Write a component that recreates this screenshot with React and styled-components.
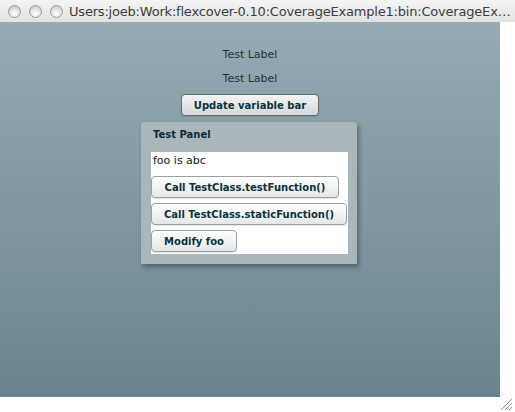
import styled, { createGlobalStyle } from "styled-components";

const GlobalStyle = createGlobalStyle`
  html, body {
    margin: 0;
    padding: 0;
    background: #ffffff;
  }
`;

const Window = styled.div`
  width: 515px;
  height: 412px;
  display: flex;
  flex-direction: column;
  overflow: hidden;
  font-family: "DejaVu Sans", Verdana, sans-serif;
`;

const TitleBar = styled.div`
  height: 22px;
  flex: none;
  display: flex;
  align-items: center;
  padding-left: 8px;
  background: linear-gradient(#f4f4f4, #e2e2e2);
  box-sizing: border-box;
`;

const Light = styled.span`
  width: 13px;
  height: 13px;
  border-radius: 50%;
  box-sizing: border-box;
  border: 1px solid #9c9c9c;
  background: radial-gradient(circle at 50% 70%, #ffffff 0%, #e6e6e6 45%, #bdbdbd 100%);
  margin-right: 8px;
  flex: none;
`;

const Title = styled.span`
  font-family: "DejaVu Sans", "Lucida Grande", sans-serif;
  font-size: 13px;
  letter-spacing: -0.2px;
  color: #3c3c3c;
  white-space: nowrap;
  margin-left: -2px;
`;

const Middle = styled.div`
  display: flex;
  height: 375px;
  flex: none;
`;

const Stage = styled.div`
  width: 500px;
  height: 375px;
  background: linear-gradient(#97aab3, #6c838d);
  display: flex;
  flex-direction: column;
  align-items: center;
  padding-top: 24px;
  box-sizing: border-box;
`;

const Label = styled.div`
  height: 18px;
  line-height: 18px;
  font-size: 11px;
  color: #21333b;
  margin-top: ${(p) => p.$top || 0}px;
`;

const Button = styled.button`
  width: ${(p) => p.$w}px;
  height: 22px;
  margin: ${(p) => p.$m || "0"};
  padding: 0;
  box-sizing: border-box;
  border: 1px solid ${(p) => (p.$dark ? "#5e6b71" : "#9aa1a5")};
  border-radius: 4px;
  background: ${(p) =>
    p.$dark
      ? "linear-gradient(#f3f4f4, #d3d8da)"
      : "linear-gradient(#ffffff, #e4e6e7)"};
  box-shadow: 0 1px 1px rgba(0, 0, 0, 0.12);
  font-family: "DejaVu Sans", Verdana, sans-serif;
  font-weight: bold;
  font-size: 10px;
  color: #0b333c;
  text-align: center;
  flex: none;
`;

const Panel = styled.div`
  width: 216px;
  height: 142px;
  margin: 6px 2px 0 0;
  box-sizing: border-box;
  padding: 0 9px 10px 10px;
  background: #a9b7bd;
  border-radius: 4px 4px 0 0;
  box-shadow: 2px 3px 4px rgba(30, 45, 52, 0.45);
  display: flex;
  flex-direction: column;
`;

const PanelTitle = styled.div`
  height: 30px;
  line-height: 26px;
  padding-left: 2px;
  font-size: 10px;
  font-weight: bold;
  color: #0f2a33;
  flex: none;
`;

const PanelBody = styled.div`
  flex: 1;
  background: #ffffff;
  display: flex;
  flex-direction: column;
  align-items: flex-start;
  gap: 5px;
`;

const BodyText = styled.div`
  height: 19px;
  line-height: 17px;
  padding-left: 2px;
  font-size: 11px;
  color: #0b1c24;
`;

const SideStrip = styled.div`
  flex: 1;
  background: #ffffff;
`;

const BottomStrip = styled.div`
  flex: 1;
  background: #ffffff;
  display: flex;
  justify-content: flex-end;
  align-items: flex-end;
`;

const Grip = styled.svg`
  width: 14px;
  height: 14px;
  margin: 0 2px 1px 0;
`;

export default function App() {
  return (
    <>
      <GlobalStyle />
      <Window>
        <TitleBar>
          <Light />
          <Light />
          <Light />
          <Title>Users:joeb:Work:flexcover-0.10:CoverageExample1:bin:CoverageEx…</Title>
        </TitleBar>
        <Middle>
          <Stage>
            <Label>Test Label</Label>
            <Label $top={6}>Test Label</Label>
            <Button $dark $w={138} $m="6px 0 0 0">
              Update variable bar
            </Button>
            <Panel>
              <PanelTitle>Test Panel</PanelTitle>
              <PanelBody>
                <BodyText>foo is abc</BodyText>
                <Button $w={188}>Call TestClass.testFunction()</Button>
                <Button $w={196}>Call TestClass.staticFunction()</Button>
                <Button $w={86}>Modify foo</Button>
              </PanelBody>
            </Panel>
          </Stage>
          <SideStrip />
        </Middle>
        <BottomStrip>
          <Grip viewBox="0 0 14 14">
            <g stroke="#8a8a8a" strokeWidth="1">
              <line x1="13" y1="2" x2="2" y2="13" />
              <line x1="13" y1="6" x2="6" y2="13" />
              <line x1="13" y1="10" x2="10" y2="13" />
            </g>
            <g stroke="#ffffff" strokeWidth="1">
              <line x1="13" y1="3" x2="3" y2="13" />
              <line x1="13" y1="7" x2="7" y2="13" />
            </g>
          </Grip>
        </BottomStrip>
      </Window>
    </>
  );
}
